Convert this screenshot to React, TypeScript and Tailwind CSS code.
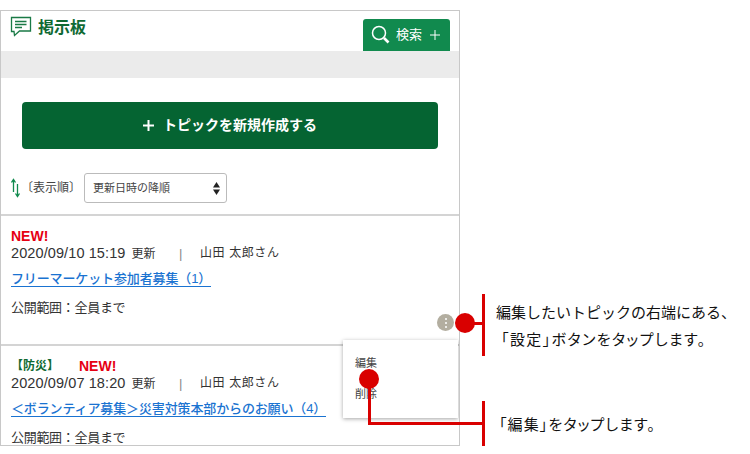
function Topic({ tag, date, title }: { tag?: boolean; date: string; title: string }) {
  return (
    <div className="border-b-2 border-[#d4d4d4] h-[130px] px-[10px] pt-[12px] text-[#333] text-[13px] leading-[17px]">
      <div className="flex h-[17px] items-center font-bold">
        {tag && <span className="text-[#0f6a33] text-[12px] w-[68px]">【防災】</span>}
        <span className="text-[#e60012] text-[14px]">NEW!</span>
      </div>
      <div className="flex h-[17px] items-center whitespace-pre">
        <span className="w-[168px] text-[12px]"><span className="text-[14.5px] tracking-[0.1px]">{date}</span><span className="ml-[6px]">更新</span></span>
        <span className="w-[21px] text-[#888]">|</span>
        <span className="text-[12px] tracking-[0.6px]">山田 太郎さん</span>
      </div>
      <div className="mt-[8px] h-[17px]">
        <span className="text-[#1a73d1] font-medium tracking-[-0.13px] border-b border-[#1a73d1] inline-block h-[17px] whitespace-pre">{title}</span>
      </div>
      <div className="mt-[12px] h-[17px] tracking-[-0.3px]">公開範囲：全員まで</div>
    </div>
  );
}

export default function App() {
  return (
    <div className="relative w-[750px] h-[454px] bg-white overflow-hidden pt-[10px] font-['Liberation_Sans','Noto_Sans_CJK_JP',sans-serif]">
      <div className="relative w-[460px] h-[436px] border border-[#c8c8c8] overflow-hidden">
        <header className="flex justify-between h-[40px]">
          <div className="flex items-start pl-[9px] pt-[5px] gap-[5px]">
            <svg width="23" height="23" viewBox="0 0 23 23" fill="none" stroke="#1a7a46" strokeWidth="1.3">
              <path d="M1.5 1.5H20.5V15H9.5L4.5 19.5L4 15.5H1.5Z" />
              <path d="M5 5.5H16.5M5 8.5H16.5M5 11.5H12" />
            </svg>
            <span className="text-[#0f6a33] text-[16px] font-bold leading-[22px] pt-[1px]">掲示板</span>
          </div>
          <div className="mt-[8px] mr-[9px] w-[87px] h-[32px] bg-[#118a4e] rounded-t-[3px] flex items-center pl-[8px] text-white text-[13px]">
            <svg width="20" height="20" viewBox="0 0 20 20" fill="none" stroke="white">
              <circle cx="8" cy="8" r="6.5" strokeWidth="1.5" />
              <path d="M13 13L17.5 17.5" strokeWidth="2.6" />
            </svg>
            <span className="ml-[5px]">検索</span>
            <svg width="10" height="10" viewBox="0 0 10 10" className="ml-[8px]" stroke="white" strokeWidth="1">
              <path d="M5 0V10M0 5H10" />
            </svg>
          </div>
        </header>
        <div className="h-[27px] bg-[#ebebeb]" />
        <div className="h-[138px] px-[21px] pt-[24px] border-b-2 border-[#d4d4d4]">
          <button className="w-[416px] h-[47px] bg-[#056432] rounded-[4px] text-white text-[14px] font-bold flex items-center justify-center whitespace-pre">
            <svg width="11" height="11" viewBox="0 0 11 11" className="mr-[9px]" stroke="white" strokeWidth="2">
              <path d="M5.5 0V11M0 5.5H11" />
            </svg>
            トピックを新規作成する
          </button>
          <div className="flex items-center mt-[24px] h-[30px]">
            <svg width="10" height="20" viewBox="0 0 10 20" className="ml-[-11px]" fill="none" stroke="#118a4e" strokeWidth="1.3">
              <path d="M2.5 14V1.5M0.5 4.5L2.5 1.5L4.5 4.5" />
              <path d="M6.5 6V18.5M4.5 15.5L6.5 18.5L8.5 15.5" />
            </svg>
            <span className="text-[#444] text-[12px] w-[63px] whitespace-pre">〔表示順〕</span>
            <div className="w-[143px] h-[30px] border border-[#bbb] rounded-[3px] flex items-center justify-between pl-[8px] pr-[6px] text-[#444] text-[11px]">
              <span>更新日時の降順</span>
              <svg width="7" height="13" viewBox="0 0 7 13" fill="#222">
                <path d="M3.5 0L7 5.5H0Z" />
                <path d="M3.5 13L7 7.5H0Z" />
              </svg>
            </div>
          </div>
        </div>
        <Topic date="2020/09/10 15:19" title="フリーマーケット参加者募集（1）" />
        <Topic tag date="2020/09/07 18:20" title="＜ボランティア募集＞災害対策本部からのお願い（4）" />

        <div className="absolute left-[436px] top-[303px] w-[17px] h-[17px] rounded-full bg-[#b3aea0] flex flex-col items-center justify-center gap-[2px]">
          <i className="w-[2px] h-[2px] bg-white rounded-full" />
          <i className="w-[2px] h-[2px] bg-white rounded-full" />
          <i className="w-[2px] h-[2px] bg-white rounded-full" />
        </div>
        <div className="absolute left-[342px] top-[329px] w-[115px] h-[78px] bg-white shadow-[0_1px_4px_rgba(0,0,0,0.35)] text-[#444] text-[11px] pl-[12px] pt-[15px]">
          <div className="h-[31px]">編集</div>
          <div>削除</div>
        </div>
      </div>

      {/* callout lines */}
      <div className="absolute left-[482px] top-[294px] w-[3px] h-[62px] bg-[#d90000]" />
      <div className="absolute left-[470px] top-[322px] w-[13px] h-[3px] bg-[#d90000]" />
      <div className="absolute left-[455px] top-[313px] w-[20px] h-[20px] rounded-full bg-[#d90000]" />
      <div className="absolute left-[482px] top-[401px] w-[3px] h-[45px] bg-[#d90000]" />
      <div className="absolute left-[368px] top-[422px] w-[115px] h-[3px] bg-[#d90000]" />
      <div className="absolute left-[368px] top-[379px] w-[3px] h-[46px] bg-[#d90000]" />
      <div className="absolute left-[359px] top-[369px] w-[20px] h-[20px] rounded-full bg-[#d90000]" />

      {/* callout texts */}
      <div className="absolute left-[496px] top-[303px] text-[15px] leading-[20px] text-[#111] whitespace-pre">編集したいトピックの右端にある、</div>
      <div className="absolute left-[501px] top-[330px] text-[15px] leading-[20px] tracking-[1.4px] text-[#111] whitespace-pre [font-feature-settings:'palt']">「設定」ボタンをタップします。</div>
      <div className="absolute left-[499px] top-[415px] text-[15px] leading-[20px] tracking-[1.1px] text-[#111] whitespace-pre [font-feature-settings:'palt']">「編集」をタップします。</div>
    </div>
  );
}
